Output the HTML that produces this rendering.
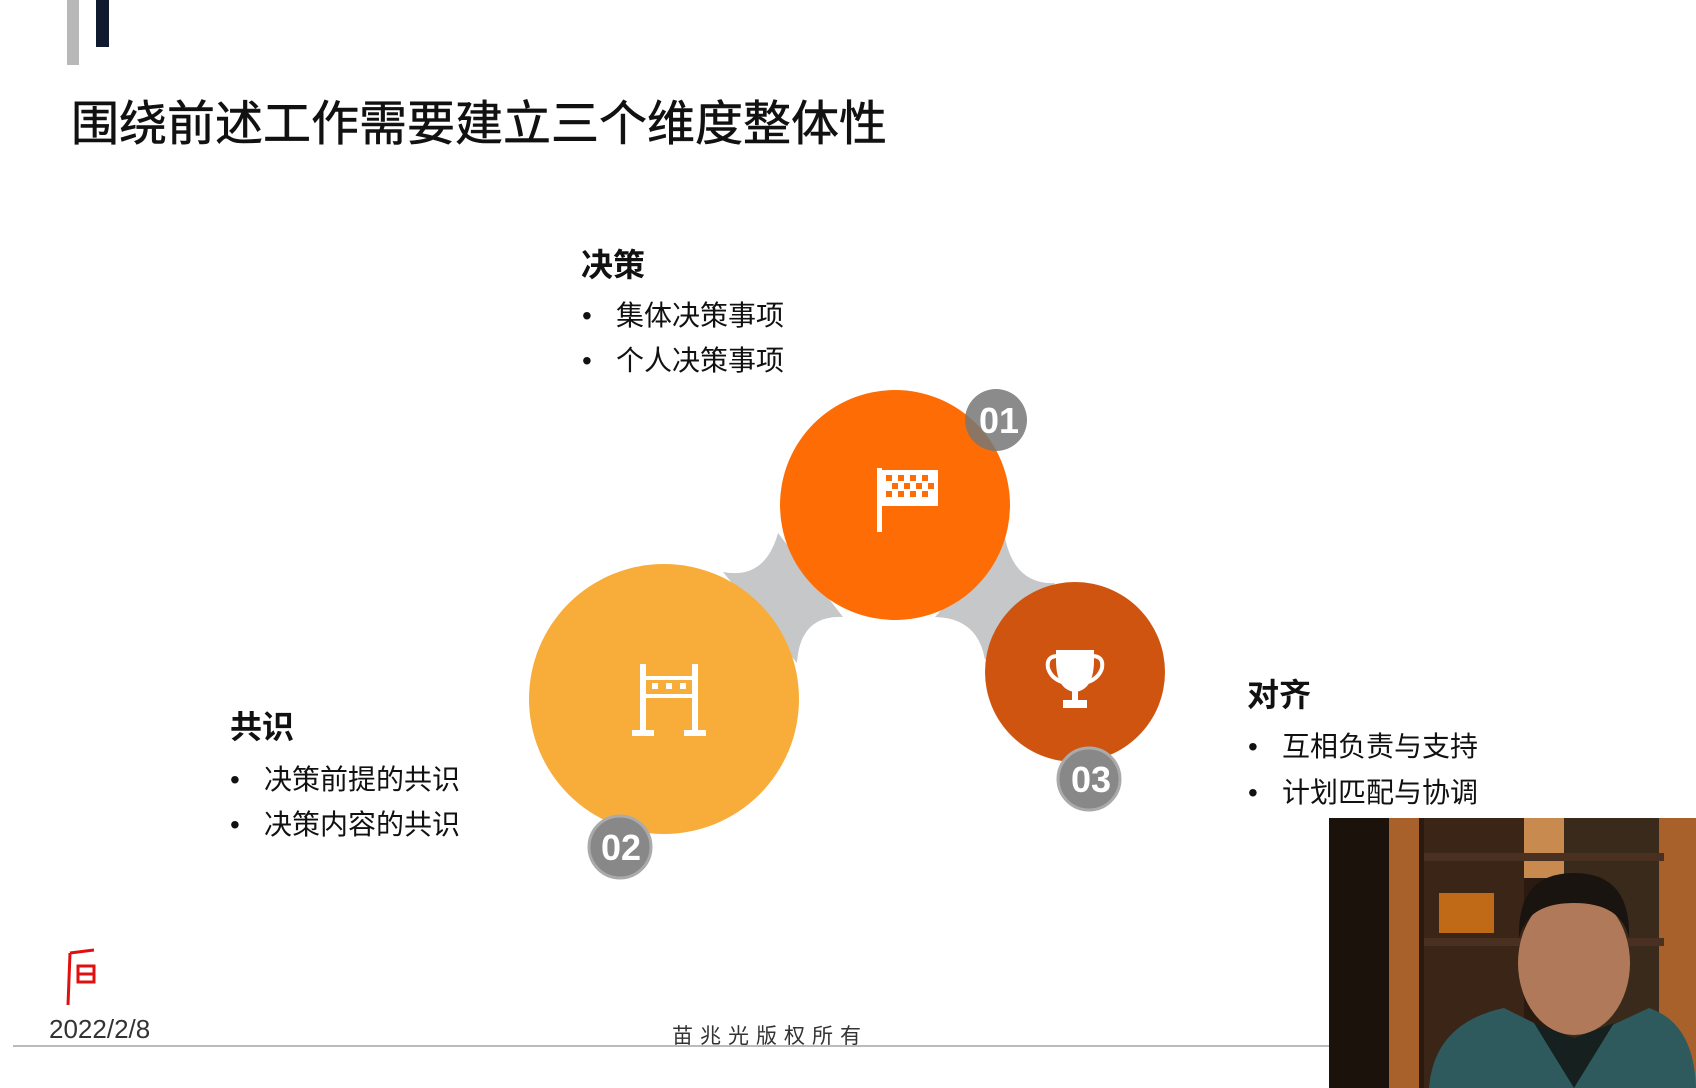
<!DOCTYPE html>
<html><head><meta charset="utf-8"><style>
body{margin:0;width:1696px;height:1088px;background:#fff;position:relative;overflow:hidden;font-family:"Liberation Sans","Noto Sans CJK SC",sans-serif;color:#111}
.t{position:absolute;white-space:nowrap}
.h{font-weight:bold;font-size:32px}
.b{font-size:28px}
.b span{display:inline-block;width:34px}
</style></head><body>
<div style="position:absolute;left:67px;top:0;width:12px;height:65px;background:#b8b8b8"></div>
<div style="position:absolute;left:96px;top:0;width:13px;height:47px;background:#0f1a2e"></div>
<div class="t" style="left:71px;top:84px;font-size:48px;letter-spacing:0px;-webkit-text-stroke:0.6px #111">围绕前述工作需要建立三个维度整体性</div>

<svg style="position:absolute;left:0;top:0" width="1696" height="1088">
<path d="M723 572 Q765 580 778 533 L843 617 Q800 615 797 663 Z" fill="#c6c7c9"/>
<path d="M1005 538 Q1015 585 1055 583 L985 660 Q978 618 935 617 Z" fill="#c6c7c9"/>
<circle cx="664" cy="699" r="135" fill="#f8ad3b"/>
<circle cx="895" cy="505" r="115" fill="#fe6d05"/>
<circle cx="1075" cy="672" r="90" fill="#cf5410"/>
<circle cx="996" cy="420" r="31" fill="#777" opacity=".85"/>
<circle cx="620" cy="847" r="31" fill="#888" stroke="#aaa" stroke-width="3"/>
<circle cx="1089" cy="779" r="31" fill="#888" stroke="#aaa" stroke-width="3"/>
<g fill="#fff" font-family="Liberation Sans" font-weight="bold" font-size="36" text-anchor="middle">
<text x="999" y="433">01</text>
<text x="621" y="860">02</text>
<text x="1091" y="792">03</text></g>
<rect x="877" y="468" width="5" height="64" fill="#fff"/>
<rect x="880" y="470" width="58" height="36" fill="#fff"/>
<g fill="#fe6d05">
<rect x="886" y="475" width="6" height="6"/><rect x="898" y="475" width="6" height="6"/><rect x="910" y="475" width="6" height="6"/><rect x="922" y="475" width="6" height="6"/>
<rect x="892" y="483" width="6" height="6"/><rect x="904" y="483" width="6" height="6"/><rect x="916" y="483" width="6" height="6"/><rect x="928" y="483" width="6" height="6"/>
<rect x="886" y="491" width="6" height="6"/><rect x="898" y="491" width="6" height="6"/><rect x="910" y="491" width="6" height="6"/><rect x="922" y="491" width="6" height="6"/></g>
<g fill="#fff"><rect x="640" y="664" width="6" height="68"/><rect x="692" y="664" width="6" height="68"/>
<rect x="644" y="676" width="50" height="4"/><rect x="644" y="694" width="50" height="4"/>
<rect x="632" y="730" width="22" height="6"/><rect x="684" y="730" width="22" height="6"/>
<rect x="652" y="683" width="6" height="6"/><rect x="666" y="683" width="6" height="6"/><rect x="680" y="683" width="6" height="6"/></g>
<g fill="none" stroke="#fff" stroke-width="4"><path d="M1058 652 h34 v8 q0 28 -17 30 q-17 -2 -17 -30z" fill="#fff"/>
<path d="M1058 656 q-12 0 -10 12 q3 10 14 14"/><path d="M1092 656 q12 0 10 12 q-3 10 -14 14"/></g>
<rect x="1072" y="690" width="6" height="12" fill="#fff"/><rect x="1063" y="700" width="24" height="8" fill="#fff"/>
<path d="M70 953 L68 1005 M70 953 L94 950 M78 966 L94 966 L94 982 L78 982 Z M78 974 H94" stroke="#e01010" stroke-width="3" fill="none"/>
<line x1="13" y1="1046" x2="1330" y2="1046" stroke="#bbb" stroke-width="2"/>
</svg>

<div class="t h" style="left:581px;top:240px">决策</div>
<div class="t b" style="left:582px;top:294px"><span>•</span>集体决策事项</div>
<div class="t b" style="left:582px;top:339px"><span>•</span>个人决策事项</div>
<div class="t h" style="left:230px;top:702px">共识</div>
<div class="t b" style="left:230px;top:758px"><span>•</span>决策前提的共识</div>
<div class="t b" style="left:230px;top:803px"><span>•</span>决策内容的共识</div>
<div class="t h" style="left:1247px;top:670px">对齐</div>
<div class="t b" style="left:1248px;top:725px"><span>•</span>互相负责与支持</div>
<div class="t b" style="left:1248px;top:771px"><span>•</span>计划匹配与协调</div>
<div class="t" style="left:49px;top:1014px;font-size:26px;color:#333">2022/2/8</div>
<div class="t" style="left:672px;top:1020px;font-size:21px;color:#333;letter-spacing:7px">苗兆光版权所有</div>

<svg style="position:absolute;left:1329px;top:818px" width="367" height="270">
<rect width="367" height="270" fill="#2a1a10"/>
<rect x="60" y="0" width="30" height="270" fill="#a8612a"/>
<rect x="0" y="0" width="60" height="270" fill="#1c120c"/>
<rect x="95" y="0" width="100" height="270" fill="#3a2516"/>
<rect x="195" y="0" width="40" height="60" fill="#c98a50"/>
<rect x="235" y="0" width="95" height="270" fill="#3a2a1c"/>
<rect x="330" y="0" width="37" height="270" fill="#a8612a"/>
<rect x="110" y="75" width="55" height="40" fill="#c06a18"/>
<rect x="95" y="120" width="240" height="8" fill="#4a3020"/>
<rect x="95" y="35" width="240" height="8" fill="#4a3020"/>
<ellipse cx="245" cy="145" rx="56" ry="72" fill="#b07a5a"/>
<path d="M190 120 Q188 55 245 55 Q302 55 300 120 Q292 85 245 85 Q198 85 190 120Z" fill="#1a1410"/>
<path d="M100 270 Q105 205 175 190 L245 225 L320 190 Q365 205 367 270Z" fill="#2e5a5e"/>
<path d="M205 205 L245 270 L285 205 L245 220Z" fill="#15201f"/>
</svg>
</body></html>
